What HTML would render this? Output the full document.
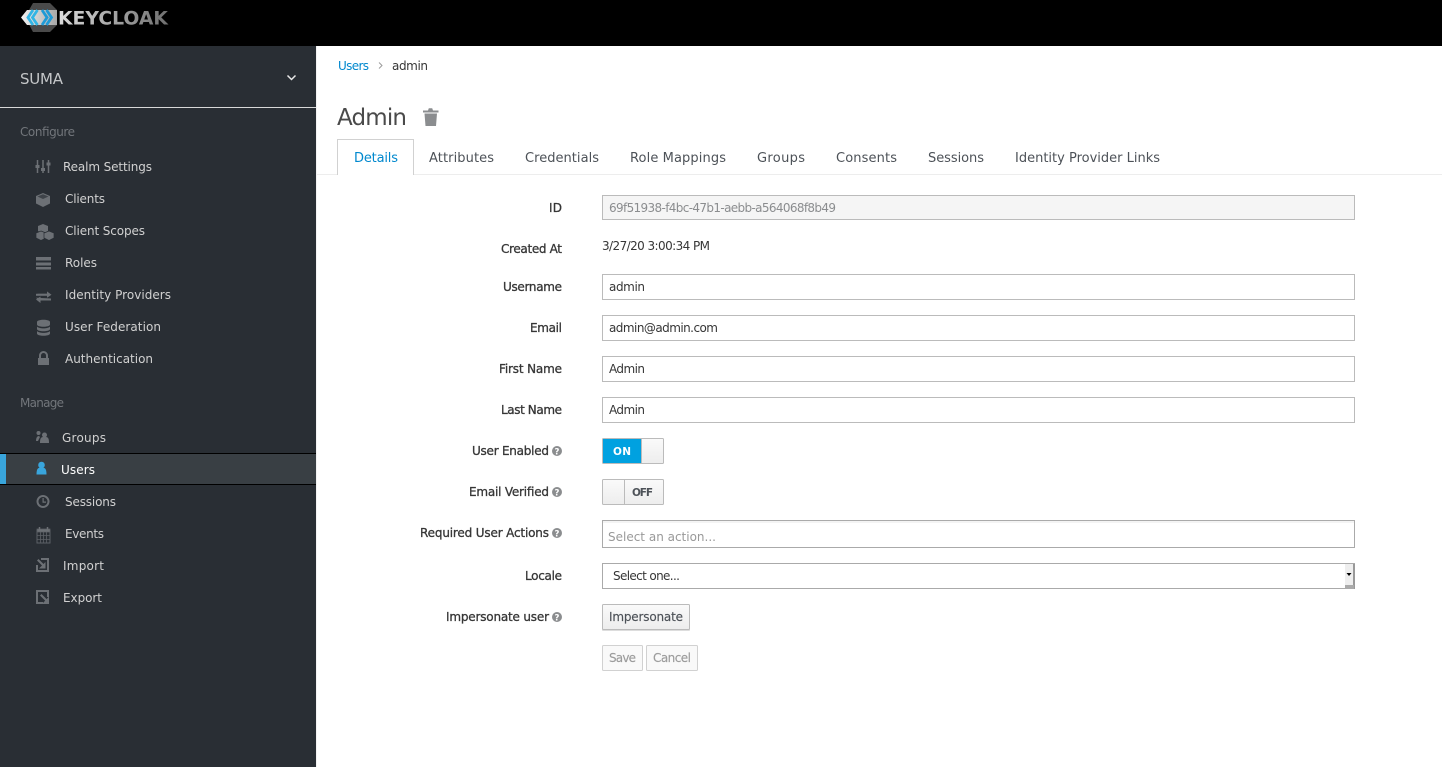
<!DOCTYPE html>
<html lang="en"><head><meta charset="utf-8"><title>Keycloak Admin</title>
<style>
html,body{margin:0;padding:0;background:#fff;overflow:hidden}
svg{display:block}
text{font-family:"DejaVu Sans","Liberation Sans",sans-serif;font-size:12px}
.n text{fill:#d1d1d1}
.h{fill:#72767b}
.l text{font-size:12px;fill:#363636;stroke:#363636;stroke-width:.3px}
.t text{font-size:13px;fill:#4d5258}
.v text{fill:#363636}
.i{fill:none;stroke:#bbb}
.g{fill:#6c7075}
</style></head><body>
<svg width="1442" height="767" viewBox="0 0 1442 767" xmlns="http://www.w3.org/2000/svg">
<defs>
<linearGradient id="b" x1="0" y1="0" x2="0" y2="1"><stop offset="0" stop-color="#fafafa"/><stop offset="1" stop-color="#ededed"/></linearGradient>
<linearGradient id="w" x1="0" y1="0" x2="1" y2="0"><stop offset="0" stop-color="#f2f2f2"/><stop offset="1" stop-color="#a8a8a8"/></linearGradient>
<linearGradient id="k" x1="0" y1="0" x2="1" y2="0"><stop offset="0" stop-color="#dcdcdc"/><stop offset="1" stop-color="#6e6e6e"/></linearGradient>
<g id="q"><circle cx="5" cy="5" r="5" fill="#8b8d8f"/><text x="5" y="8.300" text-anchor="middle" style="font-size:8.500px;font-weight:bold;fill:#fff">?</text></g>
</defs>
<rect width="1442" height="767" fill="#fff"/>
<rect width="1442" height="46" fill="#000"/>
<!-- logo -->
<polygon points="25,17 33,3 50,3 57,10 57,25 50,32 33,32" fill="#4a4a4a"/>
<polygon points="21,17.500 27,10 57,10 57,25 27,25" fill="url(#w)"/>
<path d="M33 10 L28 17.500 L33 25 M37.500 10 L32.500 17.500 L37.500 25" fill="none" stroke="#33b5e5" stroke-width="2.800"/>
<path d="M42 10 L47 17.500 L42 25 M46.500 10 L51.500 17.500 L46.500 25" fill="none" stroke="#1f9ad6" stroke-width="2.800"/>
<text x="58" y="24.500" textLength="110" lengthAdjust="spacingAndGlyphs" style="font-size:19px;font-weight:bold;fill:url(#k)">KEYCLOAK</text>
<!-- sidebar -->
<rect y="46" width="316" height="721" fill="#292e34"/>
<rect x="0" y="107" width="316" height="1" fill="#d8d8d8"/>
<text x="20" y="84" textLength="43" style="font-size:15px;fill:#c4c6c8">SUMA</text>
<path d="M287.500 75.500 L291.500 79.500 L295.500 75.500" fill="none" stroke="#e8e8e8" stroke-width="1.500"/>
<text x="20" y="136" textLength="55" class="h">Configure</text>
<text x="20" y="407" textLength="44" class="h">Manage</text>
<rect y="453" width="316" height="32" fill="#000"/>
<rect y="454" width="316" height="30" fill="#393f44"/>
<rect y="454" width="6" height="30" fill="#39a5dc"/>
<g class="n">
<text x="63" y="171" textLength="89">Realm Settings</text>
<text x="65" y="203" textLength="40">Clients</text>
<text x="65" y="235" textLength="80">Client Scopes</text>
<text x="65" y="267" textLength="32">Roles</text>
<text x="65" y="299" textLength="106">Identity Providers</text>
<text x="65" y="331" textLength="96">User Federation</text>
<text x="65" y="363" textLength="88">Authentication</text>
<text x="62" y="442" textLength="44">Groups</text>
<text x="61" y="474" textLength="34" style="fill:#fff">Users</text>
<text x="65" y="506" textLength="51">Sessions</text>
<text x="65" y="538" textLength="39">Events</text>
<text x="63" y="570" textLength="41">Import</text>
<text x="63" y="602" textLength="39">Export</text>
</g>
<!-- sidebar icons -->
<g class="g">
<path d="M37.500 160v13M43 160v13M48.500 160v13" stroke="#6c7075" stroke-width="1.500"/>
<rect x="35.500" y="165" width="4" height="3"/><rect x="41" y="168" width="4" height="3"/><rect x="46.500" y="162.500" width="4" height="3"/>
<path d="M43 193l7 3v7.500l-7 3.500-7-3.500V196z"/><path d="M37.500 196.500l5.500 2.500 5.500-2.500-5.500-2.300z" fill="#3e4349"/>
<path d="M43 224l5 2v5l-5 2.500-5-2.500v-5z"/><path d="M41 231l5 2v5l-5 2.500-5-2.500v-5z" stroke="#292e34" stroke-width=".7"/><path d="M49 231l5 2v5l-5 2.500-5-2.500v-5z" stroke="#292e34" stroke-width=".7"/>
<path d="M36 257h15v3.500H36zM36 262.500h15v3H36zM36 267h15v2.500H36z"/>
<path d="M36 293.800h11v-2.300l4 3.200-4 0zM51 298.500H40v2.800l-4-3.500z"/><rect x="36" y="293.800" width="11" height="2"/><rect x="40" y="298.500" width="11" height="2"/><path d="M47 291.500l4.500 3.300-4.500 3z"/><path d="M40.500 296.500l-4.500 3 4.500 3.500z"/>
<path d="M37 322c0-3 13-3 13 0v2.500c0 3-13 3-13 0zM37 326.500c2 2.500 11 2.500 13 0v2.500c0 3-13 3-13 0zM37 331c2 2.500 11 2.500 13 0v2.500c0 3-13 3-13 0z"/>
<path d="M39 358v-2.500a4.500 4.500 0 0 1 9 0v2.500h1v7h-11v-7zM41 358h5v-2.500a2.500 2.500 0 0 0-5 0z" fill-rule="evenodd"/>
<circle cx="38.500" cy="433" r="2"/><path d="M36 441c0-3 1-5 3-5l1 1-2 4z"/><circle cx="44.500" cy="435" r="2.500"/><path d="M40 443c0-6 1.500-6 4.500-6s4.500 0 4.500 6z"/>
<circle cx="41.500" cy="465" r="3.300" fill="#39a5dc"/><path d="M36.500 474.500c0-6 1.500-7 5-7s5 1 5 7z" fill="#39a5dc"/>
<path d="M43 495a6.500 6.500 0 1 0 .01 0zM43 497a4.500 4.500 0 1 1-.01 0z" fill-rule="evenodd"/><path d="M42.500 498h1.200v3.500H46v1.200h-3.500z"/>
<path d="M37 530.500h13v12.500H37z" fill="none" stroke="#5c6066"/><path d="M37 529h13v3H37zM37 535.500h13M37 539.500h13M40.500 532v11M43.500 532v11M46.500 532v11" stroke="#5c6066" stroke-width=".8"/><path d="M39.500 527v3M47.500 527v3" stroke="#6c7075" stroke-width="1.500"/>
<path d="M41 559h7v12H37v-6" fill="none" stroke="#6c7075" stroke-width="2"/><path d="M37 560.500l1.500-1.500 7 7-1.500 1.500z"/><polygon points="45.500,562 45.500,568.500 39,568.500"/>
<path d="M48 597v-6H37v12h6" fill="none" stroke="#6c7075" stroke-width="2"/><path d="M40 595.500l1.500-1.500 7 7-1.500 1.500z"/><polygon points="49,596.500 49,604 42,604"/>
</g>
<rect x="316" y="46" width="1" height="721" fill="#f2f2f2"/>
<!-- breadcrumb -->
<text x="338" y="70" textLength="31" style="fill:#0088ce">Users</text>
<path d="M379 62.500l3 3-3 3" fill="none" stroke="#9c9c9c"/>
<text x="392" y="70" textLength="36" style="fill:#363636">admin</text>
<text x="337" y="125" textLength="70" style="font-size:23px;fill:#4a4a4a">Admin</text>
<path d="M423 110.500h5l.8-2.300h3.400l.8 2.300h5.500v2h-15.500zM424.500 113.500h12.500l-1 12.500h-10.500z" fill="#8b8d8f"/>
<!-- tabs -->
<rect x="317" y="174" width="1125" height="1" fill="#ededed"/>
<path d="M337.500 175V139.500H413.500V175" fill="#fff" stroke="#d1d1d1"/>
<g class="t">
<text x="354" y="162" textLength="44" style="fill:#0088ce">Details</text>
<text x="429" y="162" textLength="65">Attributes</text>
<text x="525" y="162" textLength="74">Credentials</text>
<text x="630" y="162" textLength="96">Role Mappings</text>
<text x="757" y="162" textLength="48">Groups</text>
<text x="836" y="162" textLength="61">Consents</text>
<text x="928" y="162" textLength="56">Sessions</text>
<text x="1015" y="162" textLength="145">Identity Provider Links</text>
</g>
<!-- labels -->
<g class="l">
<text x="549" y="212" textLength="13">ID</text>
<text x="501" y="253" textLength="61">Created At</text>
<text x="503" y="291" textLength="59">Username</text>
<text x="530" y="332" textLength="32">Email</text>
<text x="499" y="373" textLength="63">First Name</text>
<text x="501" y="414" textLength="61">Last Name</text>
<text x="472" y="455" textLength="77">User Enabled</text>
<text x="469" y="496" textLength="80">Email Verified</text>
<text x="420" y="537" textLength="129">Required User Actions</text>
<text x="525" y="580" textLength="37">Locale</text>
<text x="446" y="621" textLength="103">Impersonate user</text>
</g>
<use href="#q" x="552" y="446"/><use href="#q" x="552" y="487"/><use href="#q" x="552" y="528"/><use href="#q" x="552" y="612"/>
<!-- inputs -->
<rect x="602.500" y="195.500" width="752" height="24" fill="#f5f5f5" stroke="#bbb"/>
<rect x="602.500" y="274.500" width="752" height="25" class="i"/>
<rect x="602.500" y="315.500" width="752" height="25" class="i"/>
<rect x="602.500" y="356.500" width="752" height="25" class="i"/>
<rect x="602.500" y="397.500" width="752" height="25" class="i"/>
<g class="v">
<text x="609" y="212" textLength="227" style="fill:#8b8d8f">69f51938-f4bc-47b1-aebb-a564068f8b49</text>
<text x="602" y="250" textLength="108">3/27/20 3:00:34 PM</text>
<text x="609" y="291" textLength="36">admin</text>
<text x="609" y="332" textLength="109">admin@admin.com</text>
<text x="609" y="373" textLength="36">Admin</text>
<text x="609" y="414" textLength="36">Admin</text>
</g>
<!-- switches -->
<rect x="602.500" y="438.500" width="61" height="25" rx="1" fill="url(#b)" stroke="#bbb"/>
<rect x="603" y="439" width="38" height="24" fill="#00a1e0"/>
<rect x="641" y="439" width="1" height="24" fill="#bbb"/>
<text x="613" y="455" textLength="18" style="font-size:10.500px;font-weight:bold;fill:#fff">ON</text>
<rect x="602.500" y="479.500" width="61" height="25" rx="1" fill="url(#b)" stroke="#bbb"/>
<rect x="624" y="480" width="1" height="24" fill="#bbb"/>
<text x="632" y="496" textLength="21" style="font-size:10.500px;font-weight:bold;fill:#4d5258">OFF</text>
<!-- required actions -->
<rect x="602.500" y="520.500" width="752" height="27" fill="#fff" stroke="#aaa"/>
<rect x="603" y="521" width="751" height="2" fill="#f4f4f4"/>
<text x="608" y="541" textLength="108" style="fill:#999">Select an action...</text>
<!-- locale -->
<rect x="602.500" y="563.500" width="752" height="25" fill="#fff" stroke="#aaa"/>
<text x="613" y="580" textLength="67" style="fill:#363636">Select one...</text>
<rect x="1345" y="564" width="9" height="25" fill="#eee"/>
<rect x="1353" y="564" width="2" height="25" fill="#999"/>
<rect x="1345" y="585" width="9" height="4" fill="#aaa"/>
<path d="M1346.500 573h5l-2.500 3z" fill="#000"/>
<!-- impersonate -->
<rect x="602" y="605" width="88" height="26" rx="1" fill="#ddd"/>
<rect x="602.500" y="604.500" width="87" height="25" rx="1" fill="url(#b)" stroke="#bbb"/>
<text x="609" y="621" textLength="74" style="fill:#4d5258;stroke:#4d5258;stroke-width:.15px">Impersonate</text>
<rect x="602.500" y="645.500" width="40" height="25" rx="1" fill="#f9f9f9" stroke="#d1d1d1"/>
<text x="609" y="662" textLength="27" style="fill:#9c9c9c;stroke:#9c9c9c;stroke-width:.15px">Save</text>
<rect x="646.500" y="645.500" width="51" height="25" rx="1" fill="#f9f9f9" stroke="#d1d1d1"/>
<text x="653" y="662" textLength="38" style="fill:#9c9c9c;stroke:#9c9c9c;stroke-width:.15px">Cancel</text>
</svg>
</body></html>
